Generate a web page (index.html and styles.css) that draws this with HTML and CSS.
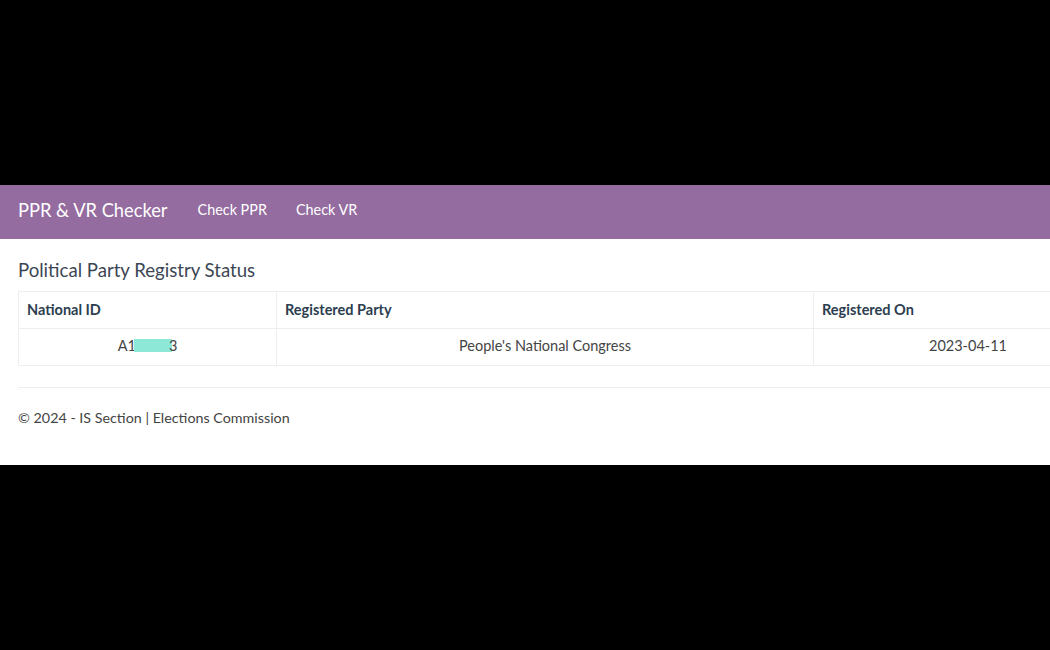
FILE: index.html
```html
<!DOCTYPE html>
<html lang="en">
<head>
    <meta charset="UTF-8">
    <meta name="viewport" content="width=device-width, initial-scale=1.0">
    <title>PPR &amp; VR Checker - Registry Status</title>
    <link rel="stylesheet" href="styles.css">
</head>
<body>
    <div class="page">
        <nav class="navbar">
            <a class="brand" href="#">PPR &amp; VR Checker</a>
            <a class="nav-link" href="#">Check PPR</a>
            <a class="nav-link" href="#">Check VR</a>
        </nav>

        <main class="content">
            <h4 class="title">Political Party Registry Status</h4>
            <div class="table-wrap">
                <table class="status-table">
                    <thead>
                        <tr>
                            <th class="col-id">National ID</th>
                            <th class="col-party">Registered Party</th>
                            <th class="col-date">Registered On</th>
                        </tr>
                    </thead>
                    <tbody>
                        <tr>
                            <td>A1<span class="redacted"></span>3</td>
                            <td>People's National Congress</td>
                            <td>2023-04-11</td>
                        </tr>
                    </tbody>
                </table>
            </div>

            <hr>
            <footer class="footer">
                <p>&copy; 2024 - IS Section | Elections Commission</p>
            </footer>
        </main>
    </div>
</body>
</html>
```

FILE: styles.css
```css
 * {
     box-sizing: border-box;
     margin: 0;
     padding: 0;
 }
 html, body {
     overflow: hidden;
 }
 body {
     font-family: Lato, 'Open Sans', sans-serif;
     background-color: #000;
     color: #444;
     font-size: 14.5px;
     line-height: 20px;
 }
.page {
     margin-top: 185px;
     background-color: #fff;
     height: 280px;
 }
.navbar {
     height: 54px;
     background-color: #946c9f;
     display: flex;
     align-items: center;
     padding: 0 18px 5px;
 }
.navbar a {
     color: #fff;
     text-decoration: none;
 }
.brand {
     font-size: 18.3px;
     margin-right: 30px;
 }
.nav-link {
     font-size: 14.4px;
     margin-right: 29px;
 }
.content {
     padding: 21px 0 0 18px;
 }
.title {
     font-size: 18.6px;
     font-weight: 400;
     line-height: 21px;
     color: #3b4654;
     margin-bottom: 10px;
 }
.table-wrap {
     width: 1105px;
 }
.status-table {
     width: 1105px;
     border-collapse: collapse;
     table-layout: fixed;
 }
.status-table th,
.status-table td {
     border: 1px solid #eee;
     height: 37px;
     padding: 8px;
 }
.status-table th {
     text-align: left;
     font-weight: 700;
     color: #2c3e50;
 }
.status-table td {
     padding: 7px 8px 9px;
     text-align: center;
     color: #444;
 }
.col-id {
     width: 258px;
 }
.col-party {
     width: 537px;
 }
.redacted {
     display: inline-block;
     width: 38px;
     height: 13px;
     background-color: #8ee8d8;
     vertical-align: -1px;
     margin-left: -2px;
     margin-right: -3px;
 }
hr {
     border: none;
     border-top: 1px solid #eee;
     margin: 21px 0 20px;
 }
.footer p {
     font-size: 14.3px;
     color: #444;
 }
```
